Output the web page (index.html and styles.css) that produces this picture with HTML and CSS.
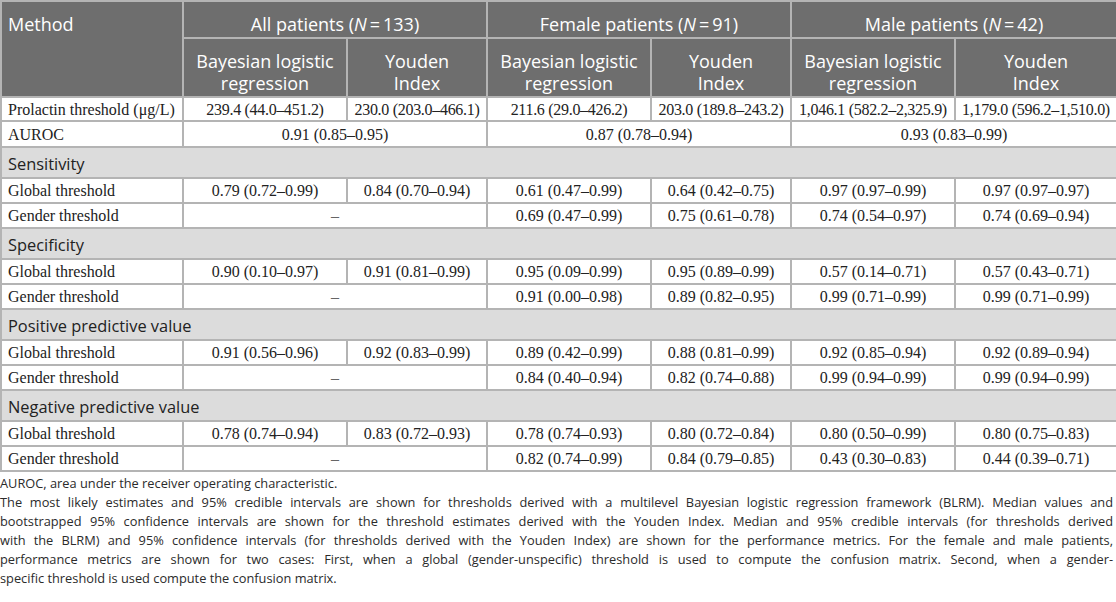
FILE: index.html
```html
<!DOCTYPE html>
<html>
	<head>
		<meta charset="UTF-8">
		<title>Prolactin thresholds</title>
		<link rel="stylesheet" href="styles.css">
	</head>
	<body>
		<table class="results">
			<colgroup>
				<col class="c-method">
				<col class="c-bay"><col class="c-you">
				<col class="c-bay"><col class="c-you">
				<col class="c-bay"><col class="c-you2">
			</colgroup>
			<thead>
				<tr class="group">
					<th rowspan="2" class="method">Method</th>
					<th colspan="2">All patients (<i>N</i>&#8201;=&#8201;133)</th>
					<th colspan="2">Female patients (<i>N</i>&#8201;=&#8201;91)</th>
					<th colspan="2">Male patients (<i>N</i>&#8201;=&#8201;42)</th>
				</tr>
				<tr class="sub">
					<th>Bayesian logistic<br>regression</th><th>Youden<br>Index</th>
					<th>Bayesian logistic<br>regression</th><th>Youden<br>Index</th>
					<th>Bayesian logistic<br>regression</th><th>Youden<br>Index</th>
				</tr>
			</thead>
			<tbody>
				<tr class="row first">
					<td class="label">Prolactin threshold (μg/L)</td>
					<td>239.4 (44.0–451.2)</td><td>230.0 (203.0–466.1)</td>
					<td>211.6 (29.0–426.2)</td><td>203.0 (189.8–243.2)</td>
					<td>1,046.1 (582.2–2,325.9)</td><td>1,179.0 (596.2–1,510.0)</td>
				</tr>
				<tr class="row auroc">
					<td class="label">AUROC</td>
					<td colspan="2">0.91 (0.85–0.95)</td>
					<td colspan="2">0.87 (0.78–0.94)</td>
					<td colspan="2">0.93 (0.83–0.99)</td>
				</tr>

				<tr class="section"><td colspan="7">Sensitivity</td></tr>
				<tr class="row">
					<td class="label">Global threshold</td>
					<td>0.79 (0.72–0.99)</td><td>0.84 (0.70–0.94)</td>
					<td>0.61 (0.47–0.99)</td><td>0.64 (0.42–0.75)</td>
					<td>0.97 (0.97–0.99)</td><td>0.97 (0.97–0.97)</td>
				</tr>
				<tr class="row">
					<td class="label">Gender threshold</td>
					<td colspan="2" class="dash">–</td>
					<td>0.69 (0.47–0.99)</td><td>0.75 (0.61–0.78)</td>
					<td>0.74 (0.54–0.97)</td><td>0.74 (0.69–0.94)</td>
				</tr>

				<tr class="section"><td colspan="7">Specificity</td></tr>
				<tr class="row">
					<td class="label">Global threshold</td>
					<td>0.90 (0.10–0.97)</td><td>0.91 (0.81–0.99)</td>
					<td>0.95 (0.09–0.99)</td><td>0.95 (0.89–0.99)</td>
					<td>0.57 (0.14–0.71)</td><td>0.57 (0.43–0.71)</td>
				</tr>
				<tr class="row">
					<td class="label">Gender threshold</td>
					<td colspan="2" class="dash">–</td>
					<td>0.91 (0.00–0.98)</td><td>0.89 (0.82–0.95)</td>
					<td>0.99 (0.71–0.99)</td><td>0.99 (0.71–0.99)</td>
				</tr>

				<tr class="section"><td colspan="7">Positive predictive value</td></tr>
				<tr class="row">
					<td class="label">Global threshold</td>
					<td>0.91 (0.56–0.96)</td><td>0.92 (0.83–0.99)</td>
					<td>0.89 (0.42–0.99)</td><td>0.88 (0.81–0.99)</td>
					<td>0.92 (0.85–0.94)</td><td>0.92 (0.89–0.94)</td>
				</tr>
				<tr class="row">
					<td class="label">Gender threshold</td>
					<td colspan="2" class="dash">–</td>
					<td>0.84 (0.40–0.94)</td><td>0.82 (0.74–0.88)</td>
					<td>0.99 (0.94–0.99)</td><td>0.99 (0.94–0.99)</td>
				</tr>

				<tr class="section"><td colspan="7">Negative predictive value</td></tr>
				<tr class="row">
					<td class="label">Global threshold</td>
					<td>0.78 (0.74–0.94)</td><td>0.83 (0.72–0.93)</td>
					<td>0.78 (0.74–0.93)</td><td>0.80 (0.72–0.84)</td>
					<td>0.80 (0.50–0.99)</td><td>0.80 (0.75–0.83)</td>
				</tr>
				<tr class="row">
					<td class="label">Gender threshold</td>
					<td colspan="2" class="dash">–</td>
					<td>0.82 (0.74–0.99)</td><td>0.84 (0.79–0.85)</td>
					<td>0.43 (0.30–0.83)</td><td>0.44 (0.39–0.71)</td>
				</tr>
			</tbody>
		</table>
		<div class="notes">
			<p>AUROC, area under the receiver operating characteristic.</p>
			<p>
				<span class="ln">The most likely estimates and 95% credible intervals are shown for thresholds derived with a multilevel Bayesian logistic regression framework (BLRM). Median values and</span>
				<span class="ln">bootstrapped 95% confidence intervals are shown for the threshold estimates derived with the Youden Index. Median and 95% credible intervals (for thresholds derived</span>
				<span class="ln">with the BLRM) and 95% confidence intervals (for thresholds derived with the Youden Index) are shown for the performance metrics. For the female and male patients,</span>
				<span class="ln">performance metrics are shown for two cases: First, when a global (gender-unspecific) threshold is used to compute the confusion matrix. Second, when a gender-</span>
				<span class="ln last">specific threshold is used compute the confusion matrix.</span>
			</p>
		</div>
	</body>
</html>
```

FILE: styles.css
```css
body{margin:0; background:#fff; color:#222;}

.results{
	width:1116px; table-layout:fixed; border-collapse:collapse;
	font-family:"Liberation Serif","Times New Roman",serif; font-size:16px;
}
.c-method{width:182px;}
.c-bay{width:164px;}
.c-you{width:140px;}
.c-you2{width:162px;}

.results th,.results td{border:2px solid #b4b4b4; padding:0 6px;}

/* header */
.results thead th{
	background:#6e6e6e; color:#fff; font-weight:normal;
	font-family:"Open Sans","Noto Sans",sans-serif; font-size:18px; line-height:22px;
}
.results .group th{padding:11px 6px 2px; text-align:center;}
.results .group th.method{text-align:left; vertical-align:top;}
.results .sub th{padding:11px 6px 2px; line-height:22px; text-align:center;}

/* body rows */
.row td{padding:2px 6px; line-height:19px; text-align:center; white-space:nowrap;}
.row td.label{text-align:left;}
.row.first td{padding:2px 2px 1px; letter-spacing:-0.3px;}
.row.first td.label{padding-left:6px; letter-spacing:0;}
.row.auroc td{padding:3px 6px 2px;}
.row td.dash{color:#666;}

.section td{
	background:#dcdcdc; color:#222;
	font-family:"Open Sans","Noto Sans",sans-serif; font-size:16.4px;
	line-height:22px; padding:5px 6px 2px;
}

/* footnotes */
.notes{
	font-family:"Open Sans","Noto Sans",sans-serif; font-size:12.8px; line-height:19px;
	color:#2b2b2b; padding:2px 3px 0 0;
}
.notes p{margin:0;}
.notes .ln{display:block; text-align:justify; text-align-last:justify; white-space:nowrap;}
.notes .ln.last{text-align-last:left;}
```
